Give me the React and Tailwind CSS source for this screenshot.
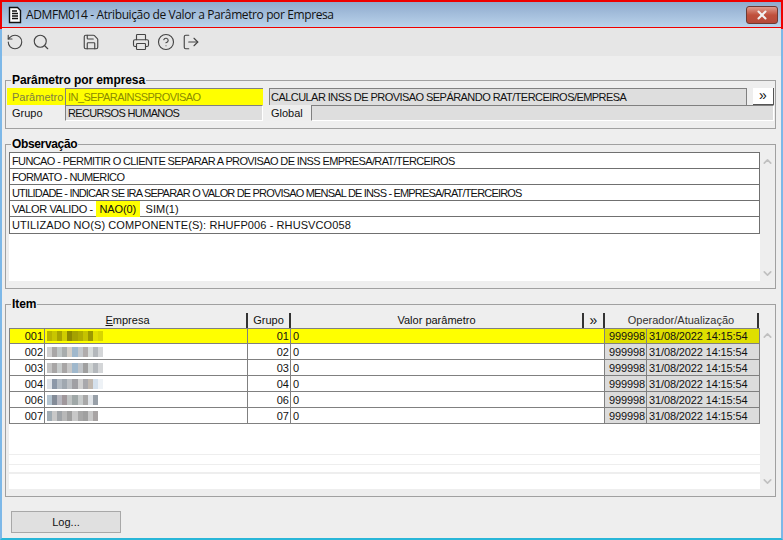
import React from "react";
import { RotateCcw, Search, Save, Printer, CircleHelp, LogOut, ChevronUp, ChevronDown, X } from "lucide-react";

const blurs = [
  ["#b8b400","#c9c600","#a8a400","#d0cd00","#8c8800","#a5a200","#b0ad00","#c6c300","#9c9900","#e2df00","#d8d500"],
  ["#d0d0d0","#a8a6a6","#c0c6c6","#a8acac","#d4cfc8","#a0b8cc","#c4c8cc","#b0acac","#d8dcdc","#b4b8bc","#d4d6d8"],
  ["#c4c4c4","#a8a6a6","#c8cccc","#a8a6a6","#c8c8c8","#a0b8cc","#c0c4c8","#a0a0a0","#d0d4d4","#b4b8bc","#d4d6d8"],
  ["#dfe3e8","#8c98a8","#b4bcc4","#a0a8b0","#bcc0c4","#a0a0a4","#d0d0d0","#a8a8ac","#c0b8b0","#d4e0ec","#eef2f6"],
  ["#b4c4d0","#848c98","#b8b8c0","#a0989c","#c0c4c4","#a0a8a8","#c8cccc","#a8a8a8","#e0e4e8","#98a0a8","#ffffff"],
  ["#a0acb4","#c8c8c8","#a0a4a8","#b8b8b8","#a0a0a0","#c8c8c8","#a8a8a8","#a0a0a0","#c8c8c8","#a8a4a4","#ffffff"],
];

const rows = ["001", "002", "003", "004", "006", "007"].map((c, i) => ({ c, g: c.slice(1), b: blurs[i] }));

const obs = [
  { t: "FUNCAO - PERMITIR O CLIENTE SEPARAR A PROVISAO DE INSS EMPRESA/RAT/TERCEIROS", k: "tracking-[-0.62px]" },
  { t: "FORMATO - NUMERICO", k: "tracking-[-0.63px]" },
  { t: "UTILIDADE - INDICAR SE IRA SEPARAR O VALOR DE PROVISAO MENSAL DE INSS - EMPRESA/RAT/TERCEIROS", k: "tracking-[-0.82px]" },
];

function Group({ title, className, legend, children }) {
  return (
    <fieldset className={"mr-[6px] ml-[3px] border border-[#a0a0a0] " + className}>
      <legend className={"ml-[5px] px-[1px] text-[12px] leading-[14px] font-bold text-black " + legend}>{title}</legend>
      {children}
    </fieldset>
  );
}

function Scroll({ className }) {
  return (
    <div className={"flex w-[15px] flex-col items-center justify-between text-[#c0c0c0] " + className}>
      <ChevronUp size={13} strokeWidth={3} />
      <ChevronDown size={13} strokeWidth={3} />
    </div>
  );
}

export default function App() {
  return (
    <div className="flex h-[540px] w-[783px] flex-col border-x-2 border-b-2 border-x-[#7db8e8] border-b-[#29b6d8] bg-[#eeeeee] font-['Liberation_Sans',sans-serif] text-[11px] text-[#111]">
      <div className="-mx-[2px] flex h-[29px] shrink-0 items-center border-2 border-[#ee0000] bg-gradient-to-b from-[#8faacd] to-[#bad3eb] pr-[3px] pl-[5px]">
        <svg width="16" height="18" viewBox="0 0 16 18" className="mr-[2px]">
          <path d="M2.5 1.5h8l3 3v12h-11z" fill="#fff" stroke="#111" strokeWidth="1.4" />
          <path d="M5 5h5M5 7.5h6M5 10h6M5 12.5h6" stroke="#111" strokeWidth="1.4" />
        </svg>
        <span className="flex-1 pl-[1px] font-['Open_Sans',sans-serif] text-[12px] tracking-[-0.39px] text-[#111]">ADMFM014 - Atribuição de Valor a Parâmetro por Empresa</span>
        <div className="flex h-[18px] w-[32px] items-center justify-center rounded-[3px] border border-[#6e3a33] bg-gradient-to-b from-[#dd9a8e] via-[#c0503c] to-[#b5493a]">
          <X size={14} strokeWidth={3.5} className="text-[#f2f2f2]" />
        </div>
      </div>

      <div className="-mt-[1px] flex h-[28px] shrink-0 items-center bg-[#e6e6e6] pl-[4px] text-[#444]">
        <RotateCcw size={18} strokeWidth={1.5} />
        <Search size={18} strokeWidth={1.5} className="ml-[8px]" />
        <Save size={18} strokeWidth={1.5} className="ml-[32px]" />
        <Printer size={18} strokeWidth={1.5} className="ml-[32px]" />
        <CircleHelp size={18} strokeWidth={1.5} className="ml-[7px]" />
        <LogOut size={18} strokeWidth={1.5} className="ml-[7px]" />
      </div>

      <Group title="Parâmetro por empresa" legend="tracking-[-0.08px]" className="mt-[17px] h-[56px] shrink-0">
        <div className="mt-[1px] flex h-[17px] items-stretch pr-[1px] pl-[1px]">
          <div className="flex w-[58px] items-center bg-[#ffff00] pt-[1px] pl-[5px] text-[#807f40]">Parâmetro</div>
          <div className="flex w-[198px] items-center border-t border-l border-[#808080] bg-[#ffff00] pt-[1px] pl-[2px] tracking-[-0.55px] text-[#8b8b00]">IN_SEPARAINSSPROVISAO</div>
          <div className="ml-[6px] flex w-[478px] items-center border-x border-t border-[#808080] bg-[#dedede] pt-[1px] pl-[1px] tracking-[-0.55px]">CALCULAR INSS DE PROVISAO SEPÁRANDO RAT/TERCEIROS/EMPRESA</div>
          <div className="ml-[6px] flex w-[21px] items-center justify-center border-r border-b border-[#555] bg-white pb-[2px] text-[14px] leading-none">»</div>
        </div>
        <div className="flex h-[16px] items-stretch pr-[1px] pl-[1px]">
          <div className="flex w-[58px] items-center pl-[5px]">Grupo</div>
          <div className="flex w-[198px] items-center border-t border-r border-b border-l border-t-[#808080] border-r-white border-b-white border-l-[#808080] bg-[#dedede] pl-[2px] tracking-[-0.65px]">RECURSOS HUMANOS</div>
          <div className="ml-[6px] flex w-[42px] items-center pl-[2px]">Global</div>
          <div className="flex-1 border-t border-r border-b border-l border-t-[#808080] border-r-white border-b-white border-l-[#808080] bg-[#dedede]"></div>
        </div>
      </Group>

      <Group title="Observação" legend="tracking-[-0.35px]" className="mt-[8px] h-[152px] shrink-0">
        <div className="mt-[1px] flex h-[129px] pl-[3px]">
          <div className="flex w-[751px] flex-col bg-white">
            <div className="border-x border-b border-t border-[#707070]">
              {obs.map((o, i) => (
                <div key={i} className={"flex h-[16px] items-center border-b border-[#707070] pt-[1px] pl-[2px] " + o.k}>{o.t}</div>
              ))}
              <div className="flex h-[16px] items-center border-b border-[#707070] pt-[1px] pl-[2px]">
                <span className="tracking-[-0.35px]">VALOR VALIDO -</span>
                <span className="ml-[3px] bg-[#ffff00] px-[3.5px] tracking-[-0.1px]">NAO(0)</span>
                <span className="ml-[6px]">SIM(1)</span>
              </div>
              <div className="flex h-[16px] items-center pl-[2px] tracking-[0.1px]">UTILIZADO NO(S) COMPONENTE(S): RHUFP006 - RHUSVCO058</div>
            </div>
          </div>
          <Scroll className="pt-[3px] pb-[1px]" />
        </div>
      </Group>

      <Group title="Item" legend="tracking-[-0.1px]" className="mt-[8px] h-[200px] shrink-0">
        <div className="mt-[1px] flex h-[177px] pl-[3px]">
          <div className="flex w-[751px] flex-col bg-white">
            <div className="flex h-[16px] bg-[#eeeeee] pt-[1px] text-center leading-[15px]">
              <div className="w-[239px] border-r-2 border-[#333]"><span className="underline">E</span>mpresa</div>
              <div className="w-[43px] border-r-2 border-[#333]">Grupo</div>
              <div className="w-[293px] border-r-2 border-[#333]">Valor parâmetro</div>
              <div className="flex w-[21px] items-center justify-center border-r-2 border-[#333] pb-[2px] text-[14px] leading-none">»</div>
              <div className="w-[154px] border-r-2 border-[#333] text-[#333]">Operador/Atualização</div>
            </div>
            {rows.map((r, i) => {
              const on = i === 0;
              return (
                <div key={r.c} className={"flex h-[16px] border-b border-[#808080] " + (on ? "border-t bg-[#ffff00]" : "bg-white")}>
                  <div className="flex w-[36px] items-center justify-end border-x border-[#808080] pt-[1px] pr-[1px]">{r.c}</div>
                  <div className="flex w-[203px] items-center border-r border-[#808080] pl-[2px]">
                    <div className="flex h-[10px] w-[56px] blur-[0.6px]">
                      {r.b.map((c, j) => <span key={j} className="h-full flex-1" style={{ backgroundColor: c }} />)}
                    </div>
                  </div>
                  <div className="flex w-[43px] items-center justify-end border-r border-[#808080] pt-[1px] pr-[1px]">{r.g}</div>
                  <div className="flex w-[314px] items-center border-r border-[#808080] pt-[1px] pl-[2px]">0</div>
                  <div className={"flex w-[42px] items-center justify-end border-r border-[#808080] pt-[1px] pr-[1px] tracking-[-0.13px] " + (on ? "bg-[#dfdf00]" : "bg-[#dcdcdc]")}>999998</div>
                  <div className={"flex w-[113px] items-center border-r border-[#808080] pt-[1px] pl-[2px] tracking-[-0.13px] " + (on ? "bg-[#dfdf00]" : "bg-[#dcdcdc]")}>31/08/2022 14:15:54</div>
                </div>
              );
            })}
            <div className="h-[30px]" />
            <div className="h-[10px] border-t border-[#eeeeee]" />
            <div className="h-[8px] border-t border-[#eeeeee]" />
            <div className="h-[2px] bg-[#eeeeee]" />
            <div className="flex-1" />
          </div>
          <Scroll className="pt-[17px] pb-[1px]" />
        </div>
      </Group>

      <div className="mt-[14px] ml-[9px] flex h-[22px] w-[110px] items-center justify-center border border-[#a8a8a8] bg-[#e0e0e0]">Log...</div>
    </div>
  );
}
